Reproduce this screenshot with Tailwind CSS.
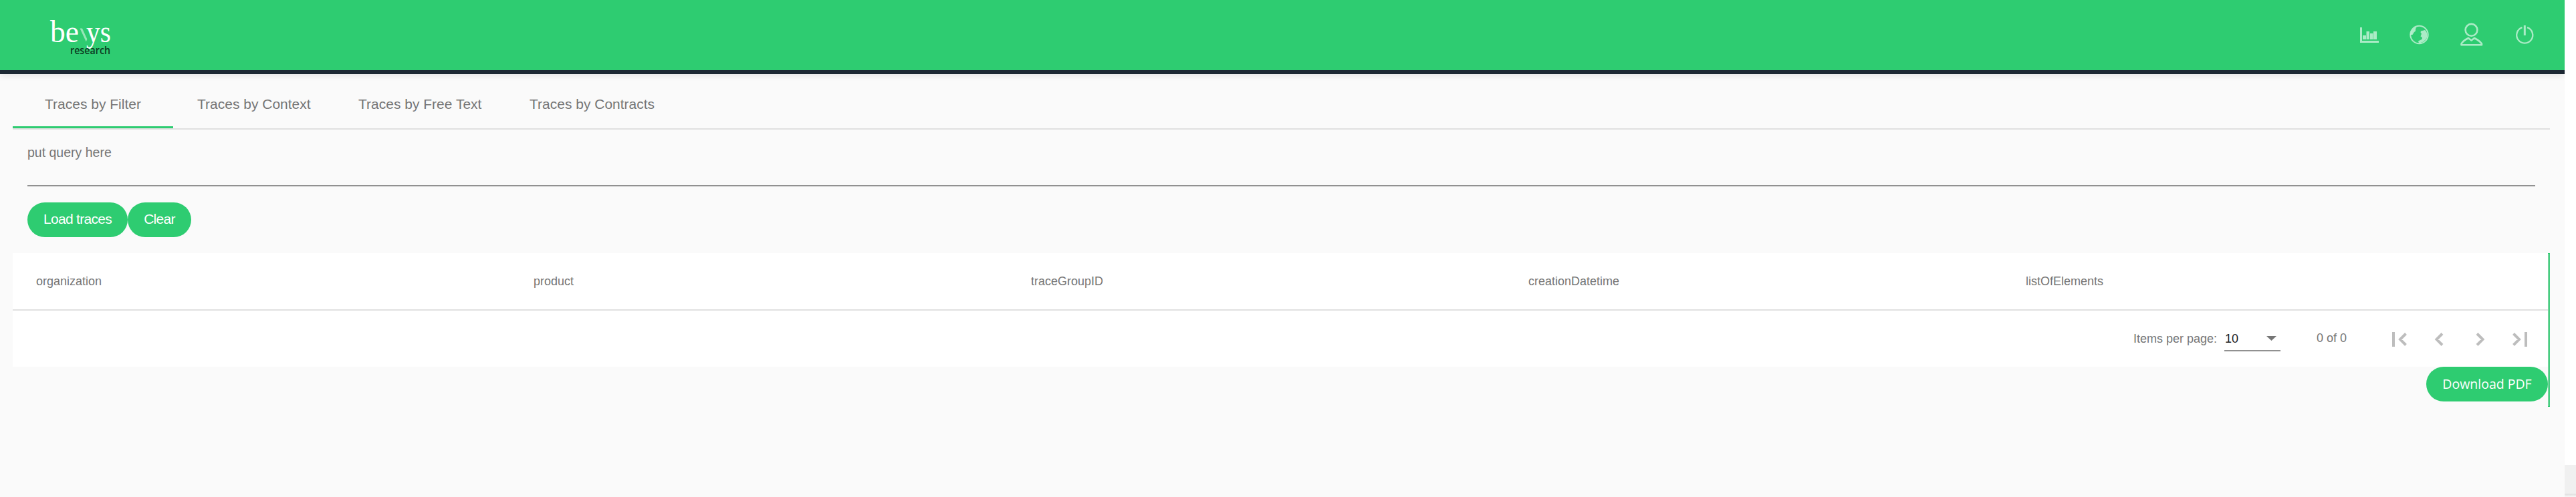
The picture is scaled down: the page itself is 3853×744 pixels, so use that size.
<!DOCTYPE html>
<html lang="en">
<head>
<meta charset="utf-8">
<title>bewys research</title>
<script src="https://cdn.jsdelivr.net/npm/@tailwindcss/browser@4"></script>
</head>
<body class="flex h-[744px] w-[3853px] overflow-hidden bg-white font-['Liberation_Sans',Arial,sans-serif] text-[#757575]">
<div class="flex h-[744px] w-[3836px] flex-col bg-[#fafafa]">
  <header class="flex h-[111px] shrink-0 items-start justify-between border-b-6 border-[#1c2833] bg-[#2ecc71] shadow-[0_2px_10px_rgba(0,0,0,0.1)]">
    <svg class="ml-[70px] mt-[20px] h-[70px] w-[110px]" viewBox="0 0 110 70" fill="none">
      <g font-family="'Liberation Serif', serif" font-size="46" fill="#fff">
        <text x="5" y="42.500" textLength="43" lengthAdjust="spacingAndGlyphs">be</text>
        <text x="59" y="42.500" textLength="37" lengthAdjust="spacingAndGlyphs">ys</text>
        <path d="M49.500 22.500h3.500l7.300 16-1.500 4z" fill-opacity=".5"/>
      </g>
      <text x="35" y="60.500" font-family="'Open Sans', sans-serif" font-size="16.500" font-weight="600" fill="#0b3a22" textLength="60" lengthAdjust="spacingAndGlyphs">research</text>
    </svg>
    <div class="mt-[30px] flex h-[45px] text-white/60">
      <svg class="h-[45px] w-[79px]" viewBox="3500 30 79 45" fill="currentColor"><path d="M3530 41h3v20h25v3h-28z"/><path d="M3534 53h5v6h-5zM3539.500 47h4.500v12h-4.500zM3545 50h4.500v9h-4.500zM3550 47h5v12h-5z"/></svg>
      <svg class="h-[45px] w-[79px]" viewBox="3579 30 79 45"><circle cx="3618.500" cy="52" r="13.200" fill="none" stroke="currentColor" stroke-width="2"/><path fill="currentColor" d="M3613 41c-4 2-7 6-7.500 11h3l2.500-4 2-1.500v-3.500l1.500-1.500zM3621 46.500l6-1.500c3 2 4 7 3 11-2 4-6 8-12 8.500l-1-3 6-3-.5-3-2-1 1.500-4-1.500-2z"/></svg>
      <svg class="h-[45px] w-[79px]" viewBox="3658 30 79 45" fill="none" stroke="currentColor" stroke-width="2.600"><circle cx="3696.500" cy="44.800" r="8.900"/><path stroke-linejoin="round" d="M3681.500 67.200h30.500v-1.700c-2-3-6-6-11-8.500l-4.500 3.500-4.500-3.500c-5 2.500-9 5.500-10.500 8.500z"/></svg>
      <svg class="mr-[20px] h-[45px] w-[79px]" viewBox="3737 30 79 45" fill="none" stroke="currentColor" stroke-width="2.300"><path d="M3772.500 41.200a12 12 0 1 0 7.500 0" /><path d="M3776.300 38v15" stroke-width="3"/></svg>
    </div>
  </header>
  <nav class="ml-[19px] mr-[22px] mt-[20px] flex h-[63px] shrink-0 border-b-2 border-[#e0e0e0] text-[21px] leading-[50px]">
    <div class="h-[61px] w-[240px] border-b-3 border-[#2ecc71] pl-[48px]">Traces by Filter</div>
    <div class="w-[242px] pl-[36px]">Traces by Context</div>
    <div class="w-[255px] pl-[35px]">Traces by Free Text</div>
    <div class="pl-[36px]">Traces by Contracts</div>
  </nav>
  <div class="ml-[41px] mr-[44px] h-[85px] shrink-0 border-b-2 border-[#919191] pt-[21px] text-[19.5px] leading-[26px]">put query here</div>
  <div class="mt-[24px] ml-[41px] flex h-[52px] shrink-0 text-[21px] leading-[50px] tracking-[-0.7px] text-white">
    <button class="h-[52px] w-[150px] rounded-full bg-[#2ecc71] pb-[2px]">Load traces</button>
    <button class="h-[52px] w-[95px] rounded-full bg-[#2ecc71] pb-[2px]">Clear</button>
  </div>
  <div class="mt-[24px] ml-[19px] flex h-[230px] w-[3795px] shrink-0">
    <div class="w-[3792px]">
      <div class="flex h-[86px] border-b-2 border-[#e0e0e0] bg-white pl-[35px] text-[18px] leading-[84px]">
        <div class="w-[744px]">organization</div>
        <div class="w-[744px]">product</div>
        <div class="w-[744px]">traceGroupID</div>
        <div class="w-[744px]">creationDatetime</div>
        <div>listOfElements</div>
      </div>
      <div class="flex h-[84px] bg-white pl-[3172px] text-[18px] leading-[84px]">
        <div class="w-[136px] shrink-0">Items per page:</div>
        <div class="mt-[24px] flex h-[37px] w-[84px] shrink-0 items-center justify-between border-b-2 border-[#919191] pr-[6px] pl-[1px] leading-[36px] text-[#202020]">10
          <svg class="h-[7px] w-[15px]" viewBox="0 0 15 7"><path d="M0 0h15l-7.500 7z" fill="#757575"/></svg>
        </div>
        <div class="-mt-px ml-[54px] w-[110px] shrink-0">0 of 0</div>
        <svg class="h-[84px] w-[230px] shrink-0" viewBox="3575 465 230 84" fill="none" stroke="#bdbdbd" stroke-width="4"><path d="M3580 497v22M3598.500 499.500l-8.500 8.500 8.500 8.500M3653 499.500l-8.500 8.500 8.500 8.500M3705 499.500l8.500 8.500-8.500 8.500M3759.500 499.500l8.500 8.500-8.500 8.500M3778 497v22"/></svg>
      </div>
      <div class="flex justify-end">
        <button class="h-[52px] w-[182px] rounded-full bg-[#2ecc71] font-['Open_Sans',sans-serif] text-[19.5px] leading-[50px] text-white">Download PDF</button>
      </div>
    </div>
    <div class="w-[3px] border border-[#2ecc71] bg-[#e0e0e0]"></div>
  </div>
</div>
<div class="flex w-[17px] flex-col bg-white pt-[696px]">
  <div class="h-[43px] bg-[#f0f0f0]"></div>
  <div class="h-[5px] bg-linear-to-b from-[#dcdcdc] to-[#f8f8f8]"></div>
</div>
</body>
</html>
